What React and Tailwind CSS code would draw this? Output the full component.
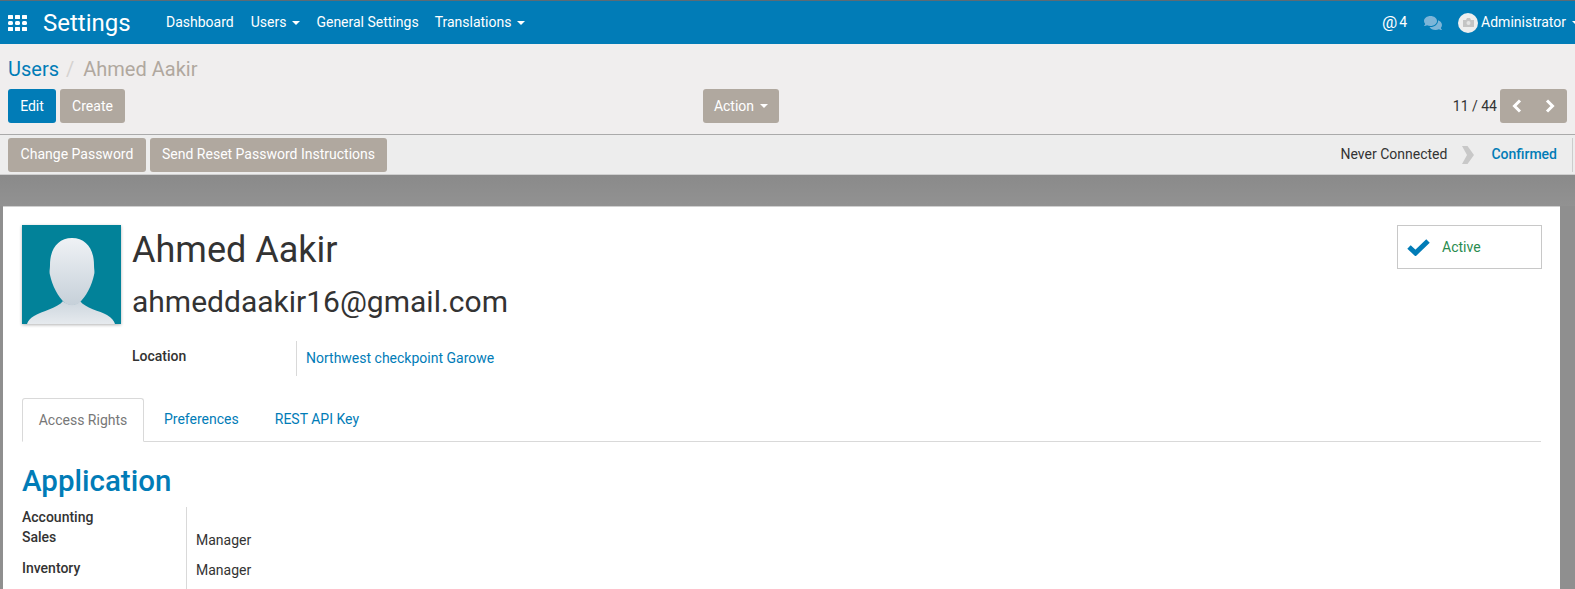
import { FaComments } from 'react-icons/fa';

const navLinks = [
  { label: 'Dashboard' },
  { label: 'Users', caret: true },
  { label: 'General Settings' },
  { label: 'Translations', caret: true }
];

function Caret({ className = 'border-t-white' }) {
  return <span className={`ml-[6px] inline-block h-0 w-0 border-x-[4px] border-t-[4px] border-x-transparent ${className}`} />;
}

function GrayButton({ children, className = '' }) {
  return (
    <button className={`flex h-[34px] items-center justify-center rounded-[3px] bg-[#b0a89f] text-[14px] text-white ${className}`}>
      {children}
    </button>
  );
}

function AppsIcon() {
  return (
    <svg width="20" height="16" viewBox="0 0 20 16" fill="white">
      <rect x="0" y="0" width="5" height="4" rx="0.5" />
      <rect x="7" y="0" width="5" height="4" rx="0.5" />
      <rect x="14" y="0" width="5" height="4" rx="0.5" />
      <rect x="0" y="6" width="5" height="4" rx="1.5" />
      <rect x="7" y="6" width="5" height="4" rx="1.5" />
      <rect x="14" y="6" width="5" height="4" rx="1.5" />
      <rect x="0" y="12" width="5" height="4" rx="0.5" />
      <rect x="7" y="12" width="5" height="4" rx="0.5" />
      <rect x="14" y="12" width="5" height="4" rx="0.5" />
    </svg>
  );
}

function Avatar() {
  return (
    <svg width="99" height="99" viewBox="0 0 99 99" className="shrink-0 shadow-[0_1px_3px_rgba(0,0,0,0.3)]">
      <defs>
        <linearGradient id="face" x1="0" y1="0" x2="0" y2="1">
          <stop offset="0" stopColor="#eff2f5" />
          <stop offset="1" stopColor="#c6d0d9" />
        </linearGradient>
        <linearGradient id="body" x1="0" y1="0" x2="0" y2="1">
          <stop offset="0" stopColor="#cdd6de" />
          <stop offset="1" stopColor="#e6eaee" />
        </linearGradient>
      </defs>
      <rect width="99" height="99" fill="#028299" />
      <path d="M41 76 C36 83 20 86 12 91 C8 93 6 96 5 99 L93 99 C92 96 90 93 85 90 C78 86 63 83 58 76 C54 81 46 81 41 76 Z" fill="url(#body)" />
      <path d="M50 13 C36 13 28 24 28 40 C28 44 27 47 28 50 C30 60 36 72 43 78 C47 81 53 81 57 78 C64 72 70 60 72 50 C73 47 72 44 72 40 C72 24 64 13 50 13 Z" fill="url(#face)" />
    </svg>
  );
}

export default function App() {
  return (
    <div className="h-[589px] w-[1575px] overflow-hidden bg-[#8f8f8f] font-['Roboto',sans-serif] text-[14px] text-[#333]">
      <header className="flex h-[44px] items-center border-t border-[#5d6b75] bg-[#017cb7] text-white">
        <span className="ml-[8px]"><AppsIcon /></span>
        <span className="ml-[15px] w-[86px] text-[24px] leading-none">Settings</span>
        <nav className="ml-[37px] flex gap-[16px] text-[14px]">
          {navLinks.map((link) => (
            <span key={link.label} className="flex items-center first:mr-[1px]">
              {link.label}
              {link.caret && <Caret />}
            </span>
          ))}
        </nav>
        <div className="-mr-[5px] ml-auto flex items-center">
          <span className="text-[17px] leading-none">@</span>
          <span className="ml-[2px] text-[14px]">4</span>
          <FaComments size={18} className="ml-[17px] text-[#7db5d8]" />
          <span className="ml-[16px] flex h-[20px] w-[20px] items-center justify-center rounded-full bg-[#eeeeee]">
            <svg width="11" height="9" viewBox="0 0 11 9"><path d="M0 2 H3 L4 0 H7 L8 2 H11 V9 H0 Z" fill="#c4c4c4" /><circle cx="5.5" cy="5" r="2" fill="#e4e4e4" /></svg>
          </span>
          <span className="ml-[3px] whitespace-nowrap text-[14px]">Administrator</span>
          <Caret />
        </div>
      </header>

      <section className="h-[91px] border-b border-[#aaaaaa] bg-[#f0eeee] px-[8px]">
        <div className="flex h-[45px] items-center pt-[5px] text-[20px]">
          <span className="text-[#017cb7]">Users</span>
          <span className="ml-[7px] text-[#d5d2d0]">/</span>
          <span className="ml-[9px] text-[#b0a89f]">Ahmed Aakir</span>
        </div>
        <div className="flex items-center">
          <button className="flex h-[34px] w-[48px] items-center justify-center rounded-[3px] bg-[#017cb7] text-[14px] text-white">Edit</button>
          <GrayButton className="ml-[4px] w-[65px]">Create</GrayButton>
          <GrayButton className="ml-[578px] w-[76px]">Action<Caret /></GrayButton>
          <span className="ml-auto">11 / 44</span>
          <div className="ml-[3px] flex h-[34px] w-[67px] items-center justify-around rounded-[3px] bg-[#b0a89f] text-white">
            <svg width="10" height="14" viewBox="0 0 10 14" fill="none" stroke="white" strokeWidth="3"><path d="M8 1.5 L2.5 7 L8 12.5" /></svg>
            <svg width="10" height="14" viewBox="0 0 10 14" fill="none" stroke="white" strokeWidth="3"><path d="M2 1.5 L7.5 7 L2 12.5" /></svg>
          </div>
        </div>
      </section>

      <section className="flex h-[40px] items-center border-b border-[#cfcfcf] bg-[#ededed] pl-[8px] pr-[2px]">
        <GrayButton className="w-[138px]">Change Password</GrayButton>
        <GrayButton className="ml-[4px] w-[237px]">Send Reset Password Instructions</GrayButton>
        <span className="ml-auto">Never Connected</span>
        <svg width="12" height="18" viewBox="0 0 12 18" className="ml-[15px]"><path d="M0 0 L5.5 0 L12 9 L5.5 18 L0 18 L5 9 Z" fill="#c8c8c8" /></svg>
        <span className="ml-[17px] mr-[15px] font-medium text-[#017cb7]">Confirmed</span>
        <span className="h-[34px] w-[1px] bg-[#cccccc]" />
      </section>

      <div className="h-[31px] bg-gradient-to-b from-[#8a8a8a] to-[#929292]" />

      <main className="ml-[3px] h-[384px] w-[1557px] border-t border-[#d0d0d0] bg-white px-[19px] pt-[18px]">
        <div className="flex items-start">
          <Avatar />
          <div className="ml-[11px] flex-1">
            <h1 className="text-[36px] leading-[50px] text-[#333]">Ahmed Aakir</h1>
            <p className="mt-[5px] text-[30px] leading-[44px] text-[#333]">ahmeddaakir16@gmail.com</p>
          </div>
          <div className="-mr-[1px] flex h-[44px] w-[145px] items-center border border-[#c8c8c8] pl-[9px]">
            <svg width="23" height="18" viewBox="0 0 23 18"><path d="M2 9 L8.5 15 L21 3" fill="none" stroke="#017cb7" strokeWidth="5" /></svg>
            <span className="ml-[12px] text-[#2a8c4f]">Active</span>
          </div>
        </div>

        <div className="ml-[110px] mt-[17px] flex h-[35px]">
          <div className="w-[164px] pt-[5px] font-medium">Location</div>
          <div className="flex items-center border-l border-[#d9d9d9] pl-[9px] text-[#017cb7]">Northwest checkpoint Garowe</div>
        </div>

        <div className="mt-[22px] flex h-[44px] border-b border-[#d9d9d9]">
          <div className="z-10 -mb-[1px] flex w-[122px] items-center justify-center rounded-t-[3px] border border-b-white border-[#d9d9d9] bg-white text-[#777]">Access Rights</div>
          <div className="ml-[20px] flex items-center text-[#017cb7]">Preferences</div>
          <div className="ml-[36px] flex items-center text-[#017cb7]">REST API Key</div>
        </div>

        <h2 className="mt-[19px] text-[29.5px] font-medium leading-[40px] text-[#017cb7]">Application</h2>

        <div className="mt-[6px] flex">
          <div className="w-[164px] font-medium leading-[20px]">
            <div>Accounting</div>
            <div>Sales</div>
            <div className="mt-[11px]">Inventory</div>
          </div>
          <div className="h-[120px] border-l border-[#d9d9d9] pl-[9px] pt-[23px]">
            <div className="leading-[20px]">Manager</div>
            <div className="mt-[10px] leading-[20px]">Manager</div>
          </div>
        </div>
      </main>
    </div>
  );
}
